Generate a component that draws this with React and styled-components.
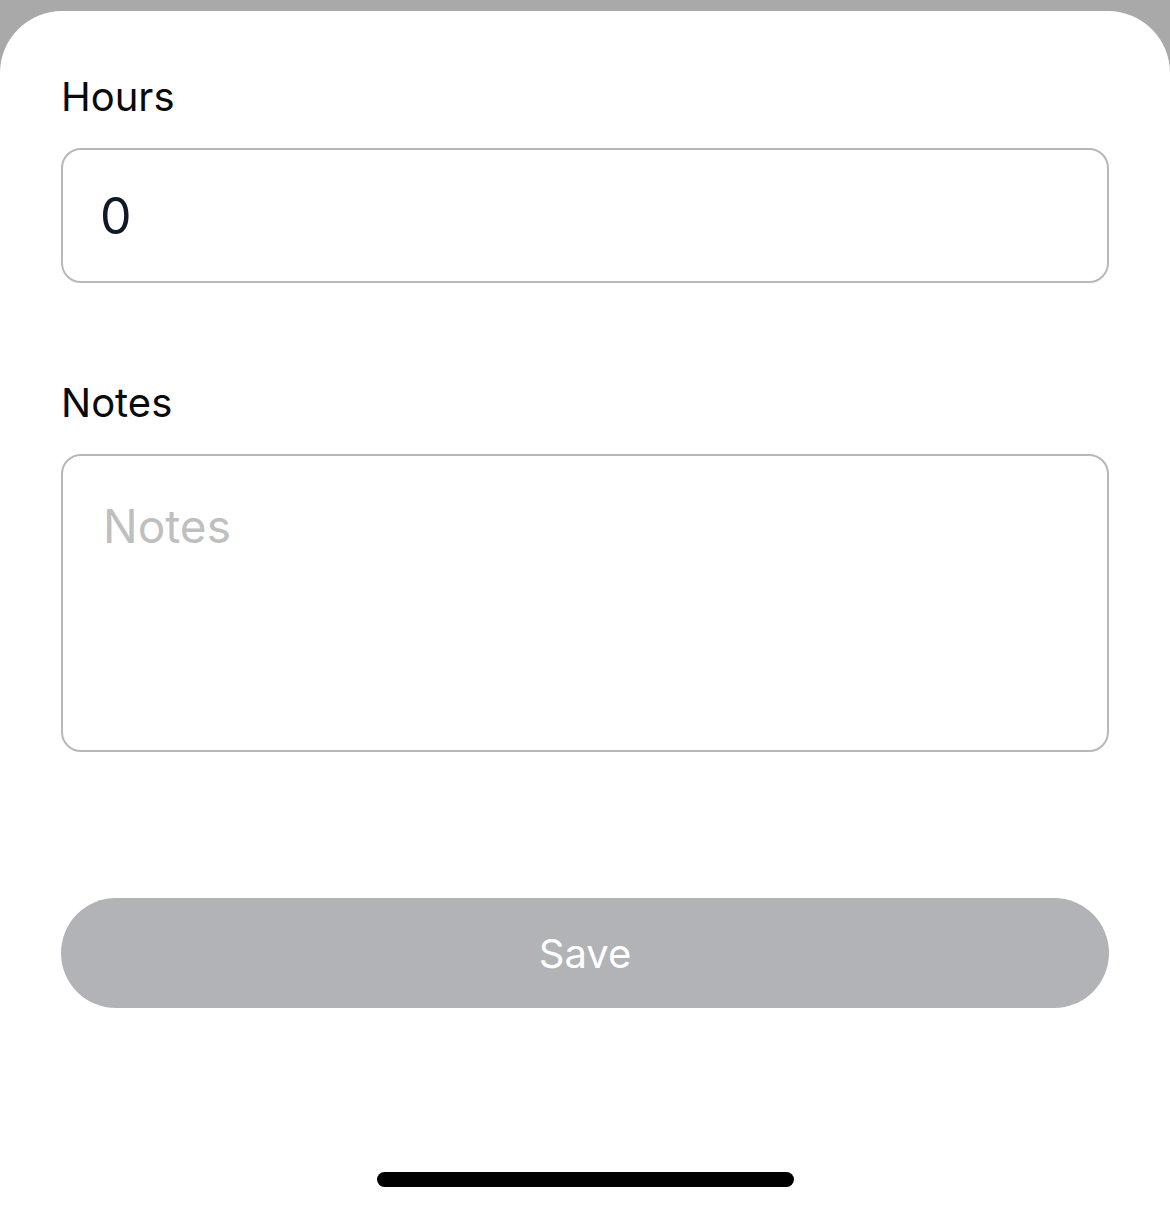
import React from "react";
import styled, { createGlobalStyle } from "styled-components";

const Global = createGlobalStyle`
  html, body { margin: 0; padding: 0; background: #a9a9a9; }
  body { font-family: Inter, "Noto Sans", sans-serif; }
  * { box-sizing: border-box; }
`;

const Sheet = styled.div`
  margin-top: 11px;
  background: #ffffff;
  border-radius: 62px 62px 0 0;
  min-height: 1200px;
  padding: 62px 61px 0 61px;
  display: flex;
  flex-direction: column;
`;

const Field = styled.div`
  display: flex;
  flex-direction: column;
  gap: 27px;
  margin-bottom: ${(p) => p.$after || 0}px;
`;

const Label = styled.label`
  font-size: 40px;
  line-height: 48px;
  color: #0a0a0a;
  font-weight: 400;
`;

const Input = styled.input`
  width: 100%;
  height: 135px;
  border: 2px solid #b8b8b8;
  border-radius: 20px;
  padding: 0 37px;
  font-family: inherit;
  font-size: 50px;
  color: #111827;
  background: #fff;
  outline: none;
`;

const TextArea = styled.textarea`
  width: 100%;
  height: 298px;
  border: 2px solid #b8b8b8;
  border-radius: 20px;
  padding: 42px 40px;
  font-family: inherit;
  font-size: 46px;
  line-height: 56px;
  color: #111827;
  background: #fff;
  outline: none;
  resize: none;
  &::placeholder { color: #bfbfbf; }
`;

const SaveButton = styled.button`
  width: 100%;
  height: 110px;
  border: none;
  border-radius: 55px;
  background: #b2b3b7;
  color: #ffffff;
  font-family: inherit;
  font-size: 40px;
  margin-top: 146px;
`;

const HomeBar = styled.div`
  align-self: center;
  width: 417px;
  height: 15px;
  border-radius: 8px;
  background: #000;
  margin-top: 164px;
`;

export default function App() {
  return (
    <>
      <Global />
      <Sheet>
        <Field $after={96}>
          <Label>Hours</Label>
          <Input defaultValue="0" />
        </Field>
        <Field>
          <Label>Notes</Label>
          <TextArea placeholder="Notes" />
        </Field>
        <SaveButton>Save</SaveButton>
        <HomeBar />
      </Sheet>
    </>
  );
}
